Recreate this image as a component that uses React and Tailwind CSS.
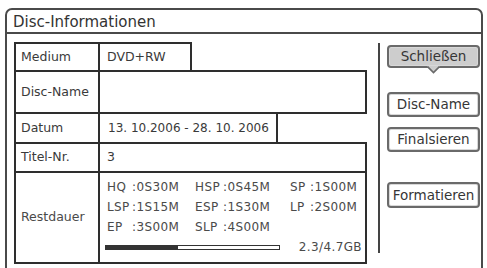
import React from "react";

const font = { fontFamily: "'DejaVu Sans', 'Liberation Sans', sans-serif" };

function Row({ w, h, label, children, valueClass = "" }) {
  return (
    <div className={`flex border-2 border-[#2e2e2e] bg-white ${w} ${h} -mt-[2px] first:mt-0`}>
      <div className="w-[84px] shrink-0 border-r-2 border-[#2e2e2e] flex items-center pl-[5px] text-[12.5px] text-[#3a3a3a]">
        {label}
      </div>
      <div className={`flex-1 flex items-center pl-[7px] text-[12.5px] text-[#3a3a3a] ${valueClass}`}>{children}</div>
    </div>
  );
}

function Btn({ children, className = "" }) {
  return (
    <div
      className={`w-[93px] flex items-center justify-center rounded-[4px] border-2 border-[#6a6a6a] text-[13.5px] text-[#363636] shadow-[inset_0_0_0_1px_#d8d8d8] ${className}`}
    >
      {children}
    </div>
  );
}

export default function App() {
  return (
    <div className="w-[487px] h-[268px] overflow-hidden bg-white" style={font}>
      <div className="ml-[5px] mt-[8px] w-[478px] h-[280px] border-2 border-[#4a4a4a] rounded-t-[7px] flex flex-col">
        <div className="h-[24px] shrink-0 border-b-2 border-[#4a4a4a] pl-[6px] pt-[2px] text-[15px] leading-[20px] text-[#333]">
          Disc-Informationen
        </div>
        <div className="flex pt-[8px] pl-[7px]">
          <div className="w-[353px] flex flex-col">
            <Row w="w-[178px]" h="h-[30px]" label="Medium">DVD+RW</Row>
            <Row w="w-[353px]" h="h-[44px]" label="Disc-Name"></Row>
            <Row w="w-[264px]" h="h-[32px]" label="Datum" valueClass="pl-[8px] !text-[12px]">13. 10.2006 - 28. 10. 2006</Row>
            <Row w="w-[353px]" h="h-[31px]" label="Titel-Nr." >3</Row>
            <div className="flex border-2 border-[#2e2e2e] bg-white w-[353px] h-[93px] -mt-[2px]">
              <div className="w-[84px] shrink-0 border-r-2 border-[#2e2e2e] flex items-center pl-[5px] text-[12.5px] text-[#4a4a4a]">
                Restdauer
              </div>
              <div className="flex-1 flex flex-col pl-[7px] pr-[3px] pt-[4px] text-[12px] tracking-[0.4px] text-[#4a4a4a]">
                <div className="grid grid-cols-[25px_63px_28px_67px_20px_1fr] leading-[20px] whitespace-nowrap">
                  <span>HQ</span><span>:0S30M</span>
                  <span>HSP</span><span>:0S45M</span>
                  <span>SP</span><span>:1S00M</span>
                  <span>LSP</span><span>:1S15M</span>
                  <span>ESP</span><span>:1S30M</span>
                  <span>LP</span><span>:2S00M</span>
                  <span>EP</span><span>:3S00M</span>
                  <span>SLP</span><span>:4S00M</span>
                </div>
                <div className="h-[20px] flex items-center">
                  <div className="-ml-[2px] w-[175px] h-[5px] border border-[#333] bg-white flex">
                    <div className="w-[72px] h-full bg-[#333]"></div>
                  </div>
                  <span className="ml-auto">2.3/4.7GB</span>
                </div>
              </div>
            </div>
          </div>
          <div className="ml-[11px] mt-[1px] w-[2px] h-[210px] bg-[#444]"></div>
          <div className="ml-[7px] flex flex-col">
            <div className="relative mt-[3px]">
              <Btn className="h-[23px] bg-[#cdcdcd]">Schließen</Btn>
              <svg className="absolute left-[40px] top-[21px]" width="13" height="8" viewBox="0 0 13 8">
                <path d="M0 0 L6.5 6.5 L13 0 Z" fill="#cdcdcd" />
                <path d="M0.5 0.5 L6.5 6.5 L12.5 0.5" fill="none" stroke="#6a6a6a" strokeWidth="1.6" />
              </svg>
            </div>
            <Btn className="mt-[24px] h-[25px] bg-white">Disc-Name</Btn>
            <Btn className="mt-[10px] h-[25px] bg-white">Finalsieren</Btn>
            <Btn className="mt-[30px] h-[26px] bg-white">Formatieren</Btn>
          </div>
        </div>
      </div>
    </div>
  );
}
